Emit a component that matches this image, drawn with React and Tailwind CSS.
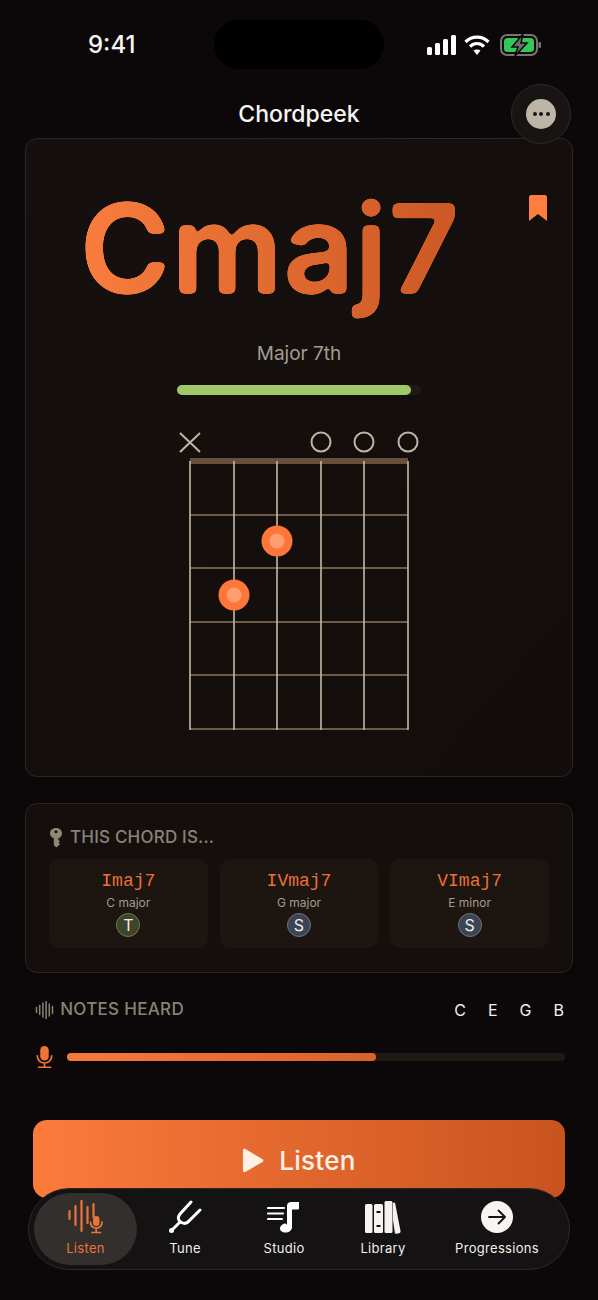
const inter = "font-['Inter','Liberation_Sans',sans-serif]";

function StatusIcons() {
  return (
    <div className="flex items-center gap-[7px]">
      <svg width="30" height="22" viewBox="0 0 30 22" fill="white">
        <rect x="0" y="13" width="5" height="8" rx="1.5" />
        <rect x="8" y="9" width="5" height="12" rx="1.5" />
        <rect x="16" y="5" width="5" height="16" rx="1.5" />
        <rect x="24" y="1" width="5" height="20" rx="1.5" />
      </svg>
      <svg width="26" height="22" viewBox="0 0 26 22" fill="none" stroke="white" strokeWidth="3.2">
        <path d="M1.5 8 C8 1.5 18 1.5 24.5 8" />
        <path d="M6 12.5 C10 8.5 16 8.5 20 12.5" />
        <path d="M13 21 L9.5 16.5 C11.5 15 14.5 15 16.5 16.5 Z" fill="white" strokeWidth="0" />
      </svg>
      <svg width="42" height="22" viewBox="0 0 42 22" fill="none" className="ml-[3px]">
        <rect x="1" y="1" width="36" height="20" rx="6" stroke="#77756f" strokeWidth="2" />
        <rect x="4" y="4" width="30" height="14" rx="3.5" fill="#34c759" />
        <rect x="38.5" y="8" width="2.5" height="6" rx="1.2" fill="#77756f" />
        <path d="M23 0 L12 13 H18 L15 22 L27 9 H21 Z" fill="#6f6d68" stroke="#0c0809" strokeWidth="1.5" />
      </svg>
    </div>
  );
}

function ChordDiagram() {
  const strings = [190, 234, 277, 321, 364, 408];
  const frets = [515, 568, 622, 675, 729];
  return (
    <svg width="250" height="310" viewBox="174 425 250 310" fill="none" className="mt-[30px]">
      <path d="M180 433 L200 452 M200 433 L180 452" stroke="#bdb5a6" strokeWidth="2" />
      {[321, 364, 408].map((x) => (
        <circle key={x} cx={x} cy="442" r="9.5" stroke="#bdb5a6" strokeWidth="2" />
      ))}
      <rect x="190" y="458" width="218" height="6" fill="#66503c" />
      {frets.map((y) => (
        <line key={y} x1="190" x2="408" y1={y} y2={y} stroke="#6d5a48" strokeWidth="2" />
      ))}
      {strings.map((x) => (
        <line key={x} x1={x} x2={x} y1="461" y2="730" stroke="#c4baa6" strokeWidth="1.6" />
      ))}
      {[[277, 541], [234, 595]].map(([x, y]) => (
        <g key={x}>
          <circle cx={x} cy={y} r="15.5" fill="#ff763a" />
          <circle cx={x} cy={y} r="7.5" fill="#ff9e70" />
        </g>
      ))}
    </svg>
  );
}

function KeyIcon() {
  return (
    <svg width="14" height="20" viewBox="0 0 14 20" fill="#8f8678">
      <path fillRule="evenodd" d="M7 0 C10.6 0 13 2.4 13 5.4 C13 7.8 11.4 9.6 9.4 10.3 V12 L11 13.2 L9.4 14.6 L11 16 L7.4 19.4 L4.8 17.2 V10.3 C2.7 9.6 1 7.8 1 5.4 C1 2.4 3.4 0 7 0 Z M7 2.2 A1.5 1.5 0 1 0 7 5.2 A1.5 1.5 0 1 0 7 2.2 Z" />
    </svg>
  );
}

function RoleCell({ numeral, keyName, role, badge }) {
  return (
    <div className="flex h-[89px] flex-col items-center rounded-[10px] bg-[#1d1510] pt-[10px]">
      <span className="font-['Liberation_Mono',monospace] text-[18px] leading-[24px] text-[#e8703a]">{numeral}</span>
      <span className={`${inter} mt-[3px] text-[12px] leading-[14px] text-[#a39b90]`}>{keyName}</span>
      <span className={`${badge} ${inter} mt-[3px] flex h-[24px] w-[24px] items-center justify-center rounded-full border text-[16px] text-[#f0ece4]`}>
        {role}
      </span>
    </div>
  );
}

function Wave({ color, bars, height = 18 }) {
  return (
    <svg width={bars.length * 3.2} height={height} viewBox={`0 0 ${bars.length * 3.2} ${height}`} stroke={color} strokeWidth="1.5" strokeLinecap="round">
      {bars.map((h, i) => (
        <line key={i} x1={i * 3.2 + 1.5} x2={i * 3.2 + 1.5} y1={(height - h) / 2} y2={(height + h) / 2} />
      ))}
    </svg>
  );
}

function MicIcon({ color, size }) {
  return (
    <svg width={size} height={size * 1.3} viewBox="0 0 20 26" fill="none" stroke={color} strokeWidth="2" strokeLinecap="round">
      <rect x="5" y="0" width="10" height="17" rx="5" fill={color} stroke="none" />
      <path d="M1.5 11.5 C1.5 17 5.5 20 10 20 C14.5 20 18.500 17 18.500 11.5 M10 20 V24.500 M3 25 H17" />
    </svg>
  );
}

function ListenIcon() {
  return (
    <svg width="36" height="34" viewBox="0 0 36 34" fill="none" stroke="#e8743c" strokeWidth="2.2" strokeLinecap="round">
      <path d="M1.500 11 V19 M7.500 6 V25 M13.500 1 V31 M19.500 7 V23 M25.500 4 V17" />
      <rect x="25" y="16" width="6.500" height="10" rx="3.200" fill="#e8743c" stroke="none" />
      <path d="M22.500 22 C22.500 26 25 28 28.200 28 C31.500 28 34 26 34 22 M28.200 28 V32 M24 32.500 H32.500" strokeWidth="1.700" />
    </svg>
  );
}

function TuneIcon() {
  return (
    <svg width="34" height="34" viewBox="0 0 34 34" fill="none" stroke="white" strokeWidth="3" strokeLinecap="round">
      <path d="M23 2 L12 14 C9 18 10.5 21 13.5 22.5 C16 23.8 19 23.5 21 21 L32 10" />
      <path d="M12 22 L4 30" />
      <circle cx="3.5" cy="30.5" r="2.5" fill="white" stroke="none" />
    </svg>
  );
}

function StudioIcon() {
  return (
    <svg width="34" height="32" viewBox="0 0 34 32" fill="none">
      <path d="M1 7 H17 M1 12.500 H16 M1 18 H15" stroke="white" strokeWidth="2.200" strokeLinecap="round" />
      <path d="M20 24 V5 C20 2 22 1 24 1 H32 V7 C32 8 31.500 8.500 30.500 8.500 H25 V26 C25 29.500 22 31.500 18.500 31.500 C15 31.500 13 29.500 13 27.500 C13 24.500 16.500 22.500 18.500 22.500 C19 22.500 19.500 23 20 24 Z" fill="white" />
    </svg>
  );
}

function LibraryIcon() {
  return (
    <svg width="38" height="34" viewBox="0 0 38 34" fill="#f5f3f0">
      <rect x="1" y="4" width="7.500" height="29" rx="1.500" />
      <rect x="10" y="4" width="9" height="29" rx="1.500" />
      <rect x="12.500" y="11" width="4" height="2" fill="#141212" />
      <rect x="12.500" y="25" width="4" height="2" fill="#141212" />
      <rect x="20.500" y="1" width="8" height="32" rx="1.500" />
      <path d="M29 3 L31 2.500 L36.500 31 C36.800 32 36 33 35 33.200 L32.500 33.800 C31.500 34 31 33.200 30.800 32.500 L29 20 Z" />
    </svg>
  );
}

function ProgressionsIcon() {
  return (
    <span className="flex h-[32px] w-[32px] items-center justify-center rounded-full bg-[#f7f5f2]">
      <svg width="20" height="16" viewBox="0 0 20 16" fill="none" stroke="#141212" strokeWidth="1.8" strokeLinecap="round" strokeLinejoin="round">
        <path d="M2 8 H18 M11.500 1.500 L18 8 L11.500 14.500" />
      </svg>
    </span>
  );
}

function TabItem({ label, width, active, children }) {
  return (
    <div
      className={`flex h-[72px] flex-col items-center justify-end pb-[9px] ${width} ${active ? "rounded-[36px] bg-[#332f2d] text-[#e8743c]" : "text-[#f2efeb]"}`}
    >
      <div className="flex h-[38px] items-center justify-center">{children}</div>
      <span className={`${inter} mt-[4px] text-[13px] leading-[16px] tracking-[0.3px]`}>{label}</span>
    </div>
  );
}

export default function App() {
  return (
    <div className={`${inter} relative h-[1300px] w-full overflow-hidden bg-[#0c0809] text-white`}>
      {/* softens the corners of the chord name, the app uses a rounded face we don't have */}
      <svg width="0" height="0" className="absolute">
        <filter id="rounded" colorInterpolationFilters="sRGB" x="-5%" y="-5%" width="110%" height="110%">
          <feGaussianBlur stdDeviation="2.4" />
          <feColorMatrix values="1 0 0 0 0 0 1 0 0 0 0 0 1 0 0 0 0 0 12 -4" />
        </filter>
      </svg>

      <header className="flex h-[88px] items-center justify-between pt-[1px] pr-[56px] pl-[88px]">
        <span className="w-[100px] text-[24px] font-medium text-[#f7f5f2]">9:41</span>
        <div className="absolute top-[20px] left-[214px] h-[49px] w-[170px] rounded-full bg-black" />
        <StatusIcons />
      </header>

      <div className="flex h-[50px] items-center justify-center pt-[3px]">
        <h1 className="text-[23px] font-medium text-[#f7f5f2]">Chordpeek</h1>
      </div>

      <button className="absolute top-[84px] left-[511px] z-10 flex h-[60px] w-[60px] items-center justify-center rounded-full border border-[#2c2a28] bg-[#171413]">
        <span className="flex h-[30px] w-[30px] items-center justify-center gap-[2.500px] rounded-full bg-[#bdb5a6]">
          <i className="h-[4px] w-[4px] rounded-full bg-[#1a1613]" />
          <i className="h-[4px] w-[4px] rounded-full bg-[#1a1613]" />
          <i className="h-[4px] w-[4px] rounded-full bg-[#1a1613]" />
        </span>
      </button>

      <main className="px-[25px]">
        <section className="relative flex h-[639px] flex-col items-center rounded-[12px] border border-[#2e2721] bg-gradient-to-br from-[#15100f] to-[#130e0b]">
          <svg width="18" height="26" viewBox="0 0 18 26" fill="#ff7d3e" className="absolute top-[56px] right-[25px]">
            <path d="M2 0 H16 C17 0 18 1 18 2 V26 L9 19 L0 26 V2 C0 1 1 0 2 0 Z" />
          </svg>
          <div className="mt-[30px] ml-[54px] self-start bg-gradient-to-r from-[#f87d3d] to-[#cb5824] bg-clip-text pb-[24px] text-[123px] leading-[160px] font-semibold tracking-[1px] text-transparent [filter:url(#rounded)]">
            Cmaj7
          </div>
          <p className="mt-[-13px] text-[19px] leading-[28px] text-[#a59c90]">Major 7th</p>
          <div className="mt-[17px] h-[10px] w-[244px] self-start ml-[151px] rounded-full bg-[#1e1a14]">
            <div className="h-full w-[234px] rounded-full bg-[#a0c86a]" />
          </div>
          <ChordDiagram />
        </section>

        <section className="mt-[26px] h-[170px] rounded-[12px] border border-[#2a2420] bg-[#140f0d] px-[23px] pt-[23px]">
          <div className="flex h-[22px] items-center gap-[7px]">
            <KeyIcon />
            <h2 className="text-[17px] font-medium tracking-[0.2px] text-[#8a8276]">THIS CHORD IS...</h2>
          </div>
          <div className="mt-[10px] grid grid-cols-3 gap-[12px]">
            <RoleCell numeral="Imaj7" keyName="C major" role="T" badge="border-[#6f7a54] bg-[#3d4428]" />
            <RoleCell numeral="IVmaj7" keyName="G major" role="S" badge="border-[#6d7480] bg-[#3c4454]" />
            <RoleCell numeral="VImaj7" keyName="E minor" role="S" badge="border-[#6d7480] bg-[#3c4454]" />
          </div>
        </section>

        <section className="mt-[26px] flex h-[22px] items-center justify-between pr-[9px] pl-[10px]">
          <div className="flex items-center gap-[6px]">
            <Wave color="#8a8276" bars={[5, 9, 14, 18, 12, 7]} />
            <h2 className="text-[17px] font-medium tracking-[0.3px] text-[#8a8276]">NOTES HEARD</h2>
          </div>
          <div className="flex gap-[22px] text-[16px] text-[#f2efeb]">
            <span>C</span>
            <span>E</span>
            <span>G</span>
            <span>B</span>
          </div>
        </section>

        <section className="mt-[23px] flex h-[26px] items-center gap-[14px] pl-[11px] pr-[8px]">
          <MicIcon color="#f07438" size={17} />
          <div className="h-[8px] flex-1 rounded-full bg-[#211a14]">
            <div className="h-full w-[309px] rounded-full bg-gradient-to-r from-[#f47a3c] to-[#d9622a]" />
          </div>
        </section>

        <button className="mx-[8px] mt-[50px] flex h-[78px] w-[532px] items-center justify-center gap-[15px] rounded-[14px] bg-gradient-to-r from-[#fb7b3b] to-[#c9531f] pt-[2px] text-[26px] font-medium tracking-[0.3px] text-[#fff1e6]">
          <svg width="22" height="25" viewBox="0 0 24 26" fill="#fff1e6">
            <path d="M1 2 C1 0.500 2.500 0 3.500 0.500 L22.500 11.500 C23.500 12.200 23.500 13.800 22.500 14.500 L3.500 25.500 C2.500 26 1 25.500 1 24 Z" />
          </svg>
          Listen
        </button>
      </main>

      <nav className="relative z-10 mx-[28px] mt-[-10px] flex h-[82px] w-[542px] items-center rounded-[41px] border border-[#2b2a29] bg-[#141212] pr-[2px] pl-[5px]">
        <TabItem label="Listen" width="w-[103px]" active>
          <ListenIcon />
        </TabItem>
        <TabItem label="Tune" width="w-[96px]">
          <TuneIcon />
        </TabItem>
        <TabItem label="Studio" width="w-[102px]">
          <StudioIcon />
        </TabItem>
        <TabItem label="Library" width="w-[96px]">
          <LibraryIcon />
        </TabItem>
        <TabItem label="Progressions" width="w-[132px]">
          <ProgressionsIcon />
        </TabItem>
      </nav>
    </div>
  );
}
